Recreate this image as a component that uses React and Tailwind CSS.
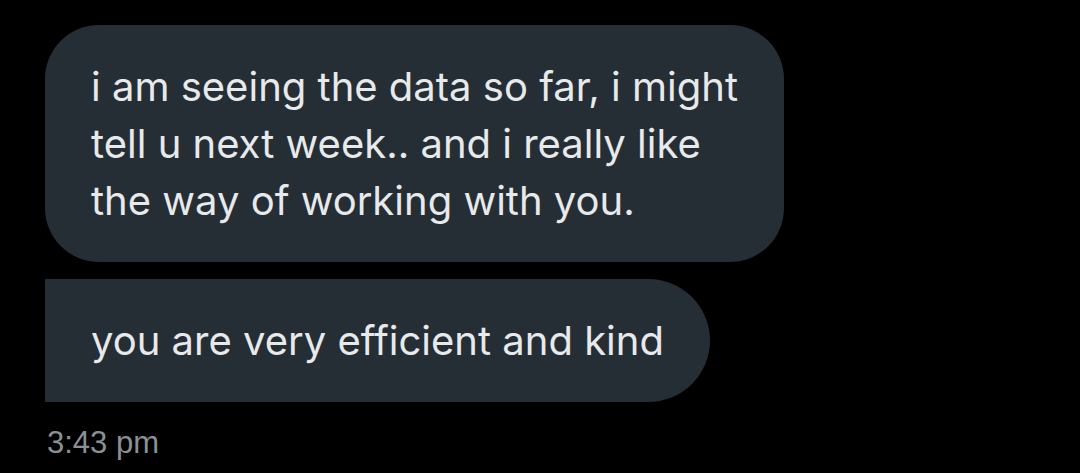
export default function App() {
  return (
    <div className="w-[1080px] h-[473px] bg-black overflow-hidden pl-[45px] pt-[25px] font-['Inter','Noto_Sans',sans-serif]">
      <div className="flex flex-col items-start gap-[17px]">
        <div className="bg-[#252d35] text-[#e7e9ea] text-[40px] leading-[57px] px-[46px] py-[33px] rounded-[54px] whitespace-nowrap">
          i am seeing the data so far, i might
          <br />
          tell u next week.. and i really like
          <br />
          the way of working with you.
        </div>
        <div className="bg-[#252d35] text-[#e7e9ea] text-[40px] leading-[57px] px-[46px] py-[33px] rounded-tl-[50px] rounded-bl-[8px] rounded-r-full whitespace-nowrap">
          you are very efficient and kind
        </div>
      </div>
      <p className="mt-[18px] ml-[2px] text-[31px] text-[#8b9095] font-['Liberation_Sans',Arial,sans-serif]">3:43 pm</p>
    </div>
  );
}
